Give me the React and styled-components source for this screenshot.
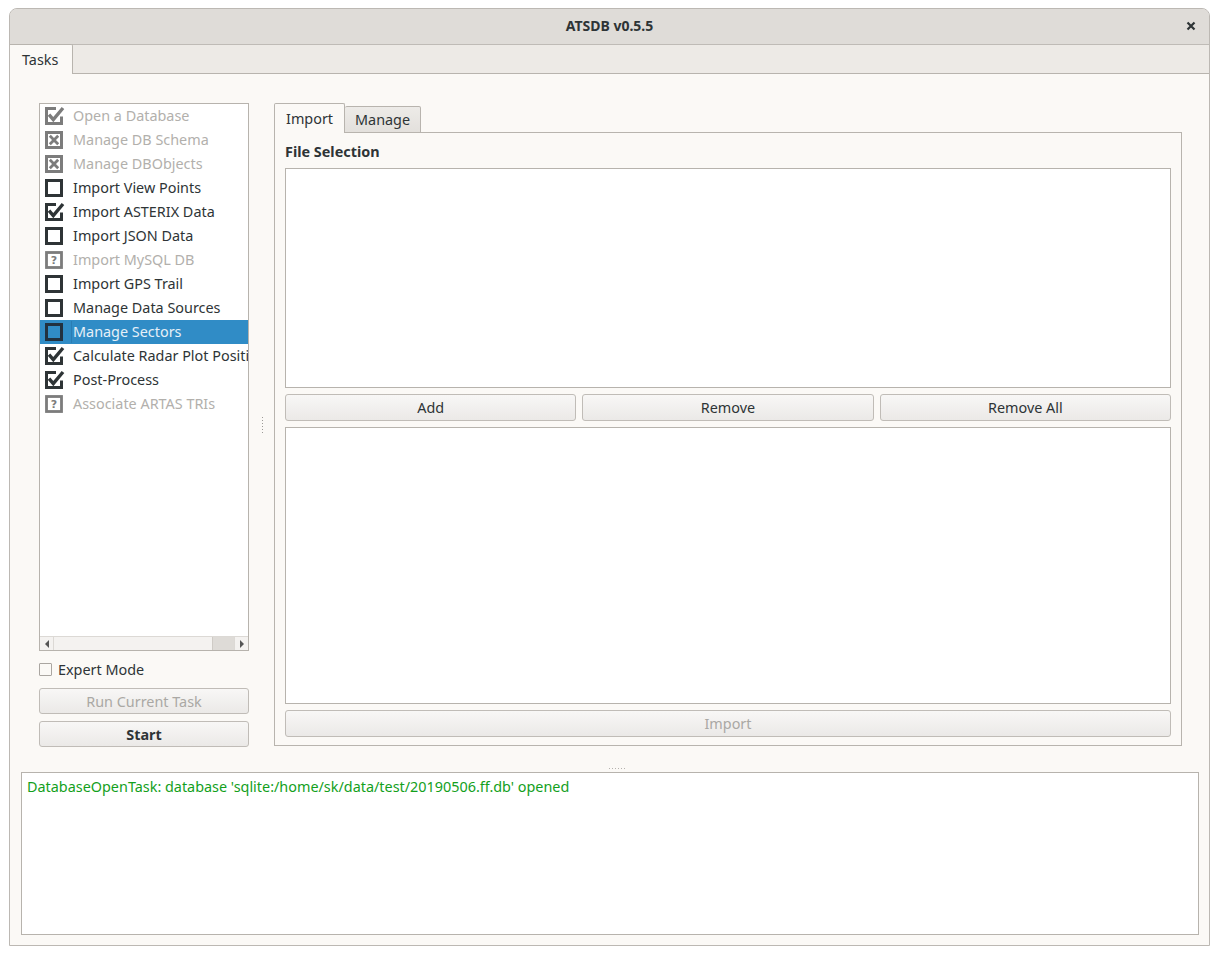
import React from 'react'
import styled, { createGlobalStyle } from 'styled-components'

const GlobalStyle = createGlobalStyle`
  html, body { margin: 0; padding: 0; background: #ffffff; }
  body { font-family: "Noto Sans", "DejaVu Sans", sans-serif; font-size: 14.4px; color: #2e3436; }
  * { box-sizing: border-box; }
`

const tasks = [
    { label: 'Open a Database', kind: 'checked', disabled: true },
    { label: 'Manage DB Schema', kind: 'cross', disabled: true },
    { label: 'Manage DBObjects', kind: 'cross', disabled: true },
    { label: 'Import View Points', kind: 'empty' },
    { label: 'Import ASTERIX Data', kind: 'checked' },
    { label: 'Import JSON Data', kind: 'empty' },
    { label: 'Import MySQL DB', kind: 'question', disabled: true },
    { label: 'Import GPS Trail', kind: 'empty' },
    { label: 'Manage Data Sources', kind: 'empty' },
    { label: 'Manage Sectors', kind: 'empty', selected: true },
    { label: 'Calculate Radar Plot Positions', kind: 'checked' },
    { label: 'Post-Process', kind: 'checked' },
    { label: 'Associate ARTAS TRIs', kind: 'question', disabled: true },
]

export default function App() {
    return (
        <>
            <GlobalStyle />
            <Page>
                <Window>
                    <TitleBar>
                        <Title>ATSDB v0.5.5</Title>
                        <CloseButton>
                            <svg width="10" height="10" viewBox="0 0 10 10">
                                <path d="M1.5 1.5 L8.5 8.5 M8.5 1.5 L1.5 8.5" stroke="#2e3436" strokeWidth="2.2" />
                            </svg>
                        </CloseButton>
                    </TitleBar>
                    <MainTabs>
                        <MainTab>Tasks</MainTab>
                    </MainTabs>
                    <Pane>
                        <TopArea>
                            <LeftColumn>
                                <TaskList>
                                    <TaskItems>
                                        {tasks.map(t => (
                                            <TaskRow key={t.label} selected={t.selected}>
                                                <TaskIcon kind={t.kind} disabled={t.disabled} selected={t.selected} />
                                                <TaskLabel disabled={t.disabled} selected={t.selected}>{t.label}</TaskLabel>
                                            </TaskRow>
                                        ))}
                                    </TaskItems>
                                    <HScroll>
                                        <ScrollArrow>
                                            <svg width="6" height="8" viewBox="0 0 6 8"><path d="M5 0 L1 4 L5 8 Z" fill="#555" /></svg>
                                        </ScrollArrow>
                                        <ScrollTrack>
                                            <ScrollHandle />
                                        </ScrollTrack>
                                        <ScrollArrow>
                                            <svg width="6" height="8" viewBox="0 0 6 8"><path d="M1 0 L5 4 L1 8 Z" fill="#555" /></svg>
                                        </ScrollArrow>
                                    </HScroll>
                                </TaskList>
                                <CheckLine>
                                    <SmallBox />
                                    <span>Expert Mode</span>
                                </CheckLine>
                                <Button disabled>Run Current Task</Button>
                                <Button bold>Start</Button>
                            </LeftColumn>
                            <VSplitter>
                                <Dots vertical />
                            </VSplitter>
                            <TabWidget>
                                <SubTabs>
                                    <SubTab active>Import</SubTab>
                                    <SubTab>Manage</SubTab>
                                </SubTabs>
                                <SubPane>
                                    <GroupLabel>File Selection</GroupLabel>
                                    <ListBox height={220} />
                                    <ButtonRow>
                                        <Button>Add</Button>
                                        <Button>Remove</Button>
                                        <Button>Remove All</Button>
                                    </ButtonRow>
                                    <ListBox height={277} />
                                    <Button disabled>Import</Button>
                                </SubPane>
                            </TabWidget>
                        </TopArea>
                        <HSplitter>
                            <Dots />
                        </HSplitter>
                        <LogBox>
                            <LogLine>DatabaseOpenTask: database 'sqlite:/home/sk/data/test/20190506.ff.db' opened</LogLine>
                        </LogBox>
                    </Pane>
                </Window>
            </Page>
        </>
    )
}

function TaskIcon({ kind, disabled, selected }) {
    const color = selected ? '#22313f' : disabled ? '#7c7c7c' : '#2e3436'
    return (
        <IconBox>
            <svg width="20" height="18" viewBox="0 0 20 18" overflow="visible">
                {kind === 'empty' && (
                    <rect x="1.5" y="1.5" width="15" height="15" fill={selected ? 'none' : '#fff'} stroke={color} strokeWidth="3" />
                )}
                {kind === 'checked' && (
                    <>
                        <path d="M11 1.5 H1.5 V16.5 H16.5 V9.5" fill="none" stroke={color} strokeWidth="3" />
                        <path d="M4 7.6 L8.3 12.6 L18 1" fill="none" stroke={color} strokeWidth="3.4" strokeLinejoin="miter" />
                    </>
                )}
                {kind === 'cross' && (
                    <>
                        <rect x="1.5" y="1.5" width="15" height="15" fill="#fff" stroke={color} strokeWidth="3" />
                        <path d="M4.8 4.8 L13.2 13.2 M13.2 4.8 L4.8 13.2" stroke={color} strokeWidth="2.8" />
                    </>
                )}
                {kind === 'question' && (
                    <>
                        <rect x="1.5" y="1.5" width="15" height="15" fill="#fff" stroke={color} strokeWidth="2.8" />
                        <text x="9" y="13.2" textAnchor="middle" fontSize="11" fontWeight="bold" fill={color} fontFamily="DejaVu Sans, sans-serif">?</text>
                    </>
                )}
            </svg>
        </IconBox>
    )
}

const Page = styled.div`
    padding: 8px 0 10px 9px;
`
const Window = styled.div`
    width: 1201px;
    height: 938px;
    border: 1px solid #bcb8b3;
    border-radius: 8px 8px 0 0;
    background: #edeae6;
    display: flex;
    flex-direction: column;
    overflow: hidden;
`
const TitleBar = styled.div`
    height: 36px;
    flex: none;
    background: #dfdcd8;
    border-bottom: 1px solid #bfbbb6;
    display: flex;
    align-items: center;
    justify-content: center;
    position: relative;
`
const Title = styled.div`
    font-weight: bold;
    font-size: 14px;
    color: #2e3436;
    margin-top: -2px;
`
const CloseButton = styled.div`
    position: absolute;
    right: 13px;
    top: 12px;
    width: 10px;
    height: 10px;
    display: flex;
`
const MainTabs = styled.div`
    height: 29px;
    flex: none;
    display: flex;
    align-items: flex-end;
    margin-bottom: -1px;
`
const MainTab = styled.div`
    height: 30px;
    width: 63px;
    padding-left: 12px;
    line-height: 30px;
    background: #fbf9f6;
    border: 1px solid #b8b4ae;
    border-left: none;
    border-bottom: none;
    border-radius: 0 2px 0 0;
    position: relative;
    z-index: 1;
`
const Pane = styled.div`
    flex: 1;
    background: #fbf9f6;
    border-top: 1px solid #b8b4ae;
    padding: 10px 10px 10px 11px;
    display: flex;
    flex-direction: column;
`
const TopArea = styled.div`
    height: 681px;
    flex: none;
    padding: 19px 17px 18px 18px;
    display: flex;
`
const LeftColumn = styled.div`
    width: 210px;
    display: flex;
    flex-direction: column;
    gap: 7px;
`
const TaskList = styled.div`
    height: 548px;
    flex: none;
    background: #fff;
    border: 1px solid #b7b3ad;
    display: flex;
    flex-direction: column;
`
const TaskItems = styled.div`
    flex: 1;
    overflow: hidden;
`
const TaskRow = styled.div`
    height: 24px;
    display: flex;
    align-items: center;
    white-space: nowrap;
    padding-left: 5px;
    background: ${p => (p.selected ? '#308cc6' : 'transparent')};
`
const IconBox = styled.div`
    width: 18px;
    height: 18px;
    flex: none;
    margin-right: 8px;
    display: flex;
    align-items: flex-start;
`
const TaskLabel = styled.span`
    color: ${p => (p.selected ? '#e6f0f8' : p.disabled ? '#b2b0ac' : '#2e3436')};
    padding-left: 1px;
    line-height: 22px;
    border-left: 1px solid ${p => (p.selected ? '#2a7db3' : 'transparent')};
`
const HScroll = styled.div`
    height: 14px;
    flex: none;
    display: flex;
    background: #f4f2f0;
    border-top: 1px solid #dcd9d5;
`
const ScrollArrow = styled.div`
    width: 13px;
    display: flex;
    align-items: center;
    justify-content: center;
`
const ScrollTrack = styled.div`
    flex: 1;
    display: flex;
    justify-content: flex-end;
    border-left: 1px solid #dcd9d5;
    border-right: 1px solid #dcd9d5;
`
const ScrollHandle = styled.div`
    width: 22px;
    background: #dedbd7;
    border-left: 1px solid #cfcbc6;
`
const CheckLine = styled.div`
    display: flex;
    align-items: center;
    gap: 6px;
    height: 22px;
    margin-top: 1px;
    margin-bottom: 2px;
`
const SmallBox = styled.div`
    width: 13px;
    height: 13px;
    border: 1px solid #aaa6a1;
    border-radius: 1px;
    background: #fbf9f6;
`
const Button = styled.div`
    height: 27px;
    flex: 1;
    display: flex;
    align-items: center;
    justify-content: center;
    border: 1px solid #c0bcb7;
    border-radius: 3px;
    background: linear-gradient(#f8f7f6, #ebe9e7);
    color: ${p => (p.disabled ? '#aaa8a4' : '#2e3436')};
    font-weight: ${p => (p.bold ? 'bold' : 'normal')};
    ${LeftColumn} > & { flex: none; height: 26px; }
`
const VSplitter = styled.div`
    width: 25px;
    display: flex;
    align-items: center;
    justify-content: center;
    padding-left: 2px;
`
const Dots = styled.div`
    width: ${p => (p.vertical ? '1px' : '17px')};
    height: ${p => (p.vertical ? '16px' : '1px')};
    background-image: ${p => (p.vertical
        ? 'linear-gradient(to bottom, #9c9a97 1px, transparent 1px)'
        : 'linear-gradient(to right, #b5b2ae 1px, transparent 1px)')};
    background-size: ${p => (p.vertical ? '1px 3px' : '3px 1px')};
`
const TabWidget = styled.div`
    flex: 1;
    display: flex;
    flex-direction: column;
`
const SubTabs = styled.div`
    height: 30px;
    display: flex;
    align-items: flex-end;
    margin-bottom: -1px;
`
const SubTab = styled.div`
    height: ${p => (p.active ? '30px' : '27px')};
    padding: 0 ${p => (p.active ? '11px' : '10px')};
    line-height: ${p => (p.active ? '29px' : '26px')};
    border: 1px solid #b8b4ae;
    border-bottom: ${p => (p.active ? 'none' : '1px solid #b8b4ae')};
    border-left: ${p => (p.active ? '1px solid #b8b4ae' : 'none')};
    border-radius: 2px 2px 0 0;
    background: ${p => (p.active ? '#fbf9f6' : 'linear-gradient(#edebe8, #e3e0dc)')};
    position: relative;
    z-index: ${p => (p.active ? 1 : 0)};
`
const SubPane = styled.div`
    height: 614px;
    border: 1px solid #b8b4ae;
    padding: 10px 10px 8px 10px;
    display: flex;
    flex-direction: column;
    gap: 6px;
`
const GroupLabel = styled.div`
    height: 18px;
    line-height: 18px;
    font-weight: bold;
    margin-bottom: 1px;
`
const ListBox = styled.div`
    height: ${p => p.height}px;
    flex: none;
    background: #fff;
    border: 1px solid #b7b3ad;
`
const ButtonRow = styled.div`
    display: flex;
    gap: 6px;
    height: 27px;
    flex: none;
`
const HSplitter = styled.div`
    height: 7px;
    flex: none;
    display: flex;
    align-items: center;
    justify-content: center;
    padding-left: 14px;
`
const LogBox = styled.div`
    flex: 1;
    background: #fff;
    border: 1px solid #b7b3ad;
    padding: 3px 5px;
`
const LogLine = styled.div`
    color: #13a01c;
    line-height: 22px;
`
